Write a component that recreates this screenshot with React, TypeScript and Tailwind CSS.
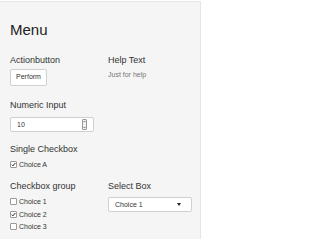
import type { ReactNode } from 'react';

const font = { fontFamily: '"Liberation Sans", Arial, sans-serif' };

function Label({ children, className = '' }: { children: ReactNode; className?: string }) {
  return <div className={`text-[9px] leading-[9px] text-[#333] ${className}`}>{children}</div>;
}

function Box({ checked }: { checked?: boolean }) {
  return (
    <span className="flex h-[7px] w-[7px] items-center justify-center rounded-[1px] border border-[#9a9a9a] bg-white">
      {checked && (
        <svg viewBox="0 0 8 8" className="h-[7px] w-[7px]">
          <path d="M1.2 4.2 L3.1 6.1 L6.9 1.6" fill="none" stroke="#111" strokeWidth="1.5" />
        </svg>
      )}
    </span>
  );
}

function Check({ label, checked }: { label: string; checked?: boolean }) {
  return (
    <div className="flex h-[7px] items-center gap-[2px]">
      <Box checked={checked} />
      <span className="text-[7px] leading-[7px] text-[#333]">{label}</span>
    </div>
  );
}

export default function App() {
  return (
    <div className="h-[239px] w-[211px] overflow-hidden bg-white" style={font}>
      <div className="mt-[1px] h-[260px] w-[201px] border-t border-r border-[#e6e6e6] bg-[#f5f5f5] pl-[10px]">
        <h2 className="mt-[20px] text-[15px] leading-[15px] text-[#222]">Menu</h2>

        <div className="grid grid-cols-[98px_1fr]">
          <div>
            <Label className="mt-[19px]">Actionbutton</Label>
            <button className="mt-[4px] flex h-[17px] w-[37px] items-center justify-center rounded-[2px] border border-[#d0d0d0] bg-white text-[7px] text-[#333]">
              Perform
            </button>
          </div>
          <div>
            <Label className="mt-[19px]">Help Text</Label>
            <div className="mt-[6px] text-[7px] leading-[7px] text-[#777]">Just for help</div>
          </div>
        </div>

        <Label className="mt-[15px]">Numeric Input</Label>
        <div className="mt-[7px] flex h-[15px] w-[84px] items-center justify-between rounded-[2px] border border-[#d0d0d0] bg-white pl-[6px] pr-[6px]">
          <span className="text-[7px] leading-[7px] text-[#333]">10</span>
          <span className="flex h-[11px] w-[5px] flex-col items-center justify-between rounded-[1px] border border-[#9a9a9a] bg-[#f4f4f4]">
            <svg viewBox="0 0 4 3" className="h-[3px] w-[3px]">
              <path d="M0.5 2.5 L2 0.8 L3.5 2.5" fill="none" stroke="#444" strokeWidth="0.8" />
            </svg>
            <svg viewBox="0 0 4 3" className="h-[3px] w-[3px]">
              <path d="M0.5 0.5 L2 2.2 L3.5 0.5" fill="none" stroke="#444" strokeWidth="0.8" />
            </svg>
          </span>
        </div>

        <Label className="mt-[13px]">Single Checkbox</Label>
        <div className="mt-[7px]">
          <Check label="Choice A" checked />
        </div>

        <div className="grid grid-cols-[98px_1fr]">
          <div>
            <Label className="mt-[14px]">Checkbox group</Label>
            <div className="mt-[7px] flex flex-col gap-[5.5px]">
              <Check label="Choice 1" />
              <Check label="Choice 2" checked />
              <Check label="Choice 3" />
            </div>
          </div>
          <div>
            <Label className="mt-[14px]">Select Box</Label>
            <div className="mt-[6px] flex h-[15px] w-[84px] items-center justify-between rounded-[2px] border border-[#d0d0d0] bg-white pl-[6px] pr-[10px]">
              <span className="text-[7px] leading-[7px] text-[#333]">Choice 1</span>
              <span className="h-0 w-0 border-x-[2px] border-t-[3px] border-x-transparent border-t-[#222]" />
            </div>
          </div>
        </div>
      </div>
    </div>
  );
}
